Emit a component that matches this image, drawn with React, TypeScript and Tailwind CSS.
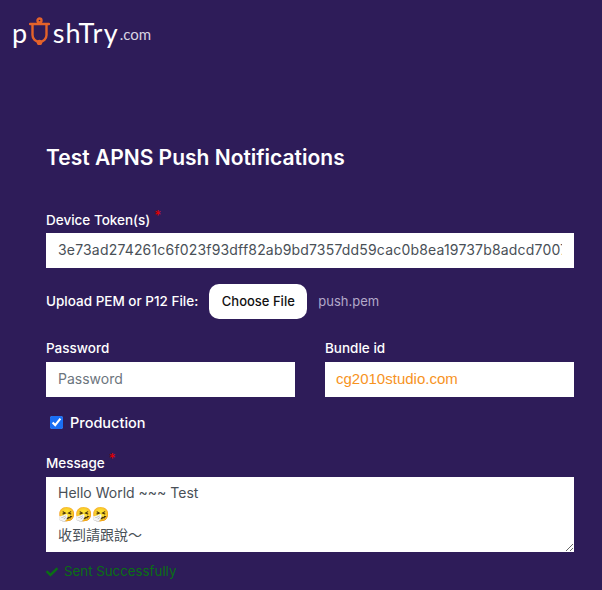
import React from 'react';
import { FaCheck } from 'react-icons/fa';

const token = '3e73ad274261c6f023f93dff82ab9bd7357dd59cac0b8ea19737b8adcd7007f3a1';
const font = "font-['Inter','Noto_Sans_CJK_TC',sans-serif]";

const Logo: React.FC = () => (
  <div className="flex items-end h-[28px] text-white font-['Lato',sans-serif] leading-none">
    <span className="text-[27px] tracking-[0.5px] mb-[-1px]">p</span>
    <svg width="21" height="28" viewBox="0 0 21 28" className="ml-[1px]" fill="none" stroke="#e4622a" strokeWidth="2.4">
      <circle cx="10.5" cy="3.5" r="2" />
      <path d="M1 7h19M3.5 7v11a7 7 0 0 0 14 0V7" strokeLinecap="round" />
      <circle cx="10.5" cy="25.5" r="1.6" />
    </svg>
    <span className="text-[27px] tracking-[1.2px] ml-[3px] mb-[-1px]">shTry</span>
    <span className="text-[15px] text-[#d8d4e2] ml-[1px] mb-[3px]">.com</span>
  </div>
);

const Label: React.FC<{ text: string; required?: boolean }> = ({ text, required }) => (
  <label className="block text-[13.5px] font-[450] leading-5 text-white">
    {text}
    {required && <span className="relative -top-[5px] ml-1 text-[#e00000]">*</span>}
  </label>
);

const inputCls = 'block w-full h-[35px] bg-white pl-3 pr-3 pb-[2px] text-[14px] text-[#495057] outline-none placeholder:text-[#6c757d]';

export default function App() {
  return (
    <div className={`min-h-[590px] bg-[#2e1c59] overflow-hidden ${font}`}>
      <div className="pl-3 pt-[17px]">
        <Logo />
      </div>

      <div className="pl-[46px] pr-[28px]">
        <h1 className="mt-[99px] text-[21px] font-semibold leading-7 text-white">Test APNS Push Notifications</h1>

        <div className="mt-[38px]">
          <Label text="Device Token(s)" required />
          <input className={`${inputCls} mt-[3px] tracking-[0.18px]`} defaultValue={token} />
        </div>

        <div className="mt-4 flex items-center">
          <span className="text-[13.5px] font-[450] text-white">Upload PEM or P12 File:</span>
          <button className="ml-[11px] h-[35px] w-[98px] rounded-[10px] bg-white text-[13px] font-[450] text-[#111]">Choose File</button>
          <span className="ml-[11px] text-[13px] text-[#b3a9c9]">push.pem</span>
        </div>

        <div className="mt-[19px] grid grid-cols-2 gap-[30px]">
          <div>
            <Label text="Password" />
            <input className={`${inputCls} mt-[4px]`} placeholder="Password" />
          </div>
          <div>
            <Label text="Bundle id" />
            <input className={`${inputCls} mt-[4px] !pl-[11px] font-['Liberation_Sans',sans-serif] text-[15px] text-[#f7931e]`} defaultValue="cg2010studio.com" />
          </div>
        </div>

        <label className="mt-[15px] ml-[4px] flex items-center gap-[7px] text-[14.5px] font-[450] text-white">
          <input type="checkbox" defaultChecked className="h-[13px] w-[13px] accent-[#1a6ff5]" />
          Production
        </label>

        <div className="mt-[19px]">
          <Label text="Message" required />
          <textarea
            className="mt-[4px] block w-full h-[75px] bg-white px-3 pt-[5px] pb-[4px] text-[14px] leading-[21px] text-[#495057] outline-none"
            defaultValue={'Hello World ~~~ Test\n🤧🤧🤧\n收到請跟說～'}
          />
        </div>

        <div className="mt-[10px] flex items-center gap-[6px] text-[13.3px] text-[#0a6f14]">
          <FaCheck className="h-3 w-3" />
          Sent Successfully
        </div>
      </div>
    </div>
  );
}
